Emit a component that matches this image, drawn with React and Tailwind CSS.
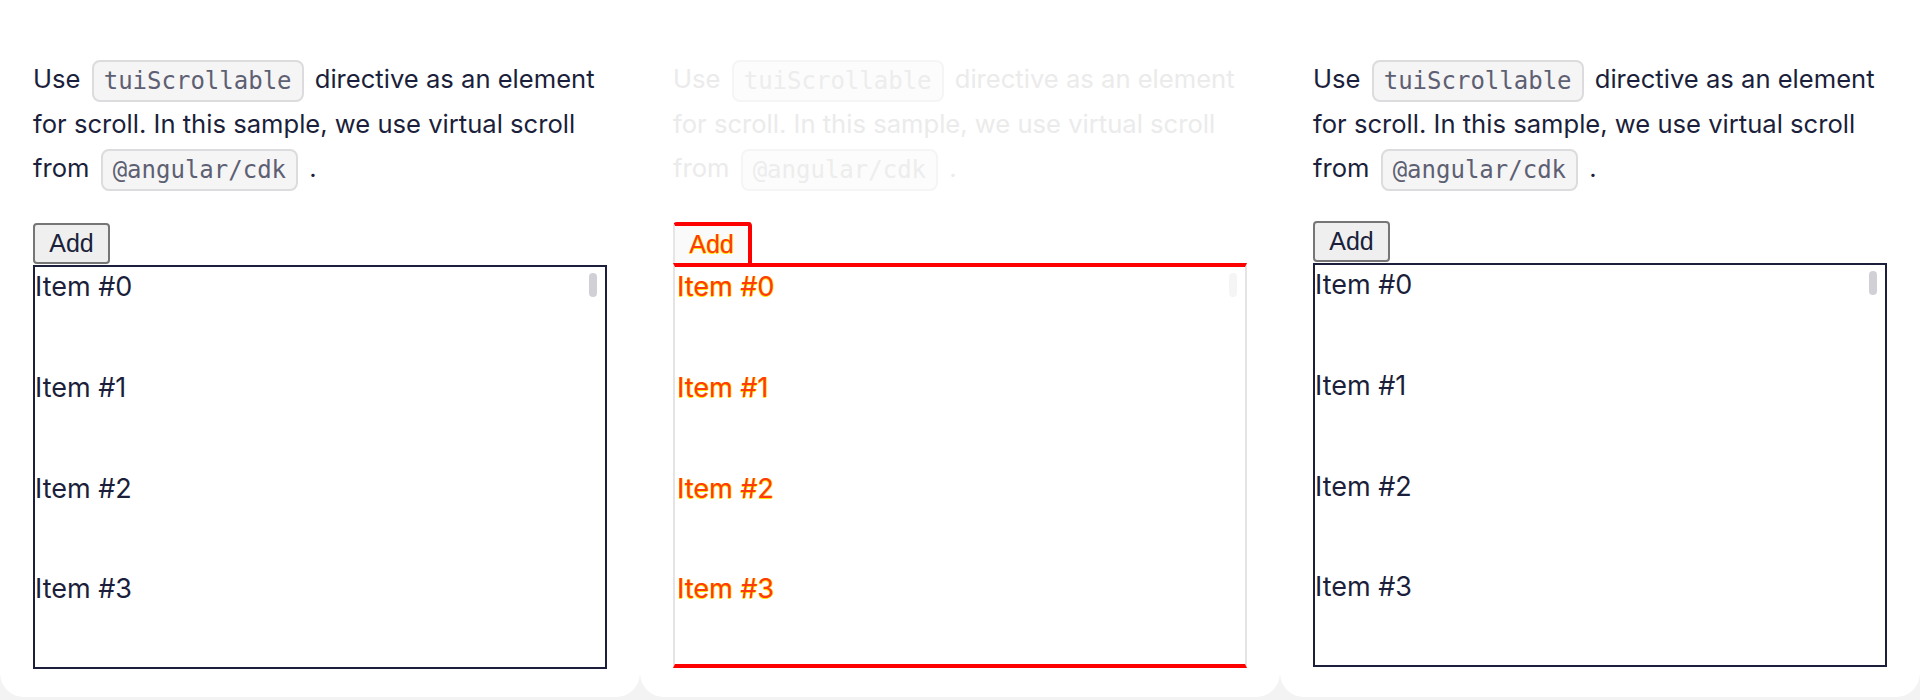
import React from 'react'

const body = "font-['Inter',sans-serif]"

function Chip({ children, faded }) {
    return (
        <code
            className={
                faded
                    ? "mx-[4px] inline-block h-[42px] rounded-[8px] border-2 border-[#f5f5f5] bg-[#fcfcfc] px-[10px] align-middle font-['DejaVu_Sans_Mono',monospace] text-[24px] leading-[38px] text-[#ededed]"
                    : "mx-[4px] inline-block h-[42px] rounded-[8px] border-2 border-[#dcdcdf] bg-[#f5f5f6] px-[10px] align-middle font-['DejaVu_Sans_Mono',monospace] text-[24px] leading-[38px] text-[#5d6072]"
            }
        >
            {children}
        </code>
    )
}

function Panel({ faded, shift }) {
    // only the rows that fit in the viewport (virtual scroll)
    const items = [0, 1, 2, 3]

    return (
        <div className="h-[697px] w-[640px] shrink-0 rounded-b-[24px] bg-white px-[33px] pt-[57px]">
            <p className={`${body} text-[25.6px] leading-[44px] ${faded ? 'text-[#ebebeb]' : 'text-[#1b1f3b]'}`}>
                Use <Chip faded={faded}>tuiScrollable</Chip> directive as an element
                <br />
                for scroll. In this sample, we use virtual scroll
                <br />
                from <Chip faded={faded}>@angular/cdk</Chip> .
            </p>

            <div className={shift}>
                {faded ? (
                    <button className="block h-[41px] w-[79px] rounded-t-[4px] border-t-4 border-r-4 border-l-2 border-t-[#ff0000] border-r-[#ff0000] border-l-[#e6e6e6] bg-[#fafafa] font-['Liberation_Sans',sans-serif] text-[25px] text-[#ff3a10] [text-shadow:0_1px_0_#ffe600,1px_0_0_#ffe600]">
                        Add
                    </button>
                ) : (
                    <button className="block h-[41px] w-[77px] rounded-[4px] border-2 border-[#767676] bg-[#efefef] font-['Liberation_Sans',sans-serif] text-[25px] text-[#1b1f3b]">
                        Add
                    </button>
                )}

                <div
                    className={
                        faded
                            ? 'relative h-[405px] overflow-hidden border-x-2 border-y-4 border-x-[#e4e4e4] border-y-[#ff0000] bg-white'
                            : 'relative mt-px h-[404px] overflow-hidden border-2 border-[#1b1f3b] bg-white'
                    }
                >
                    {items.map((i) => (
                        <div key={i} className="h-[100.8px]">
                            <span
                                className={
                                    faded
                                        ? `${body} pl-[2px] text-[27px] leading-[40px] text-[#ff3a10] [text-shadow:0_1px_0_#ffe600,1px_0_0_#ffe600]`
                                        : `${body} text-[27px] leading-[40px] text-[#1b1f3b]`
                                }
                            >
                                Item #{i}
                            </span>
                        </div>
                    ))}

                    {/* scrollbar thumb */}
                    <div
                        className={`absolute right-[8px] top-[6px] h-[24px] w-[8px] rounded-full ${faded ? 'bg-[#f5f5f5]' : 'bg-[#d0d0d6]'}`}
                    />
                </div>
            </div>
        </div>
    )
}

export default function App() {
    return (
        <div className="flex h-[700px] w-[1920px] overflow-hidden bg-[#f3f3f3]">
            <Panel shift="mt-[32px]" />
            <Panel faded shift="mt-[31px]" />
            <Panel shift="mt-[30px]" />
        </div>
    )
}
